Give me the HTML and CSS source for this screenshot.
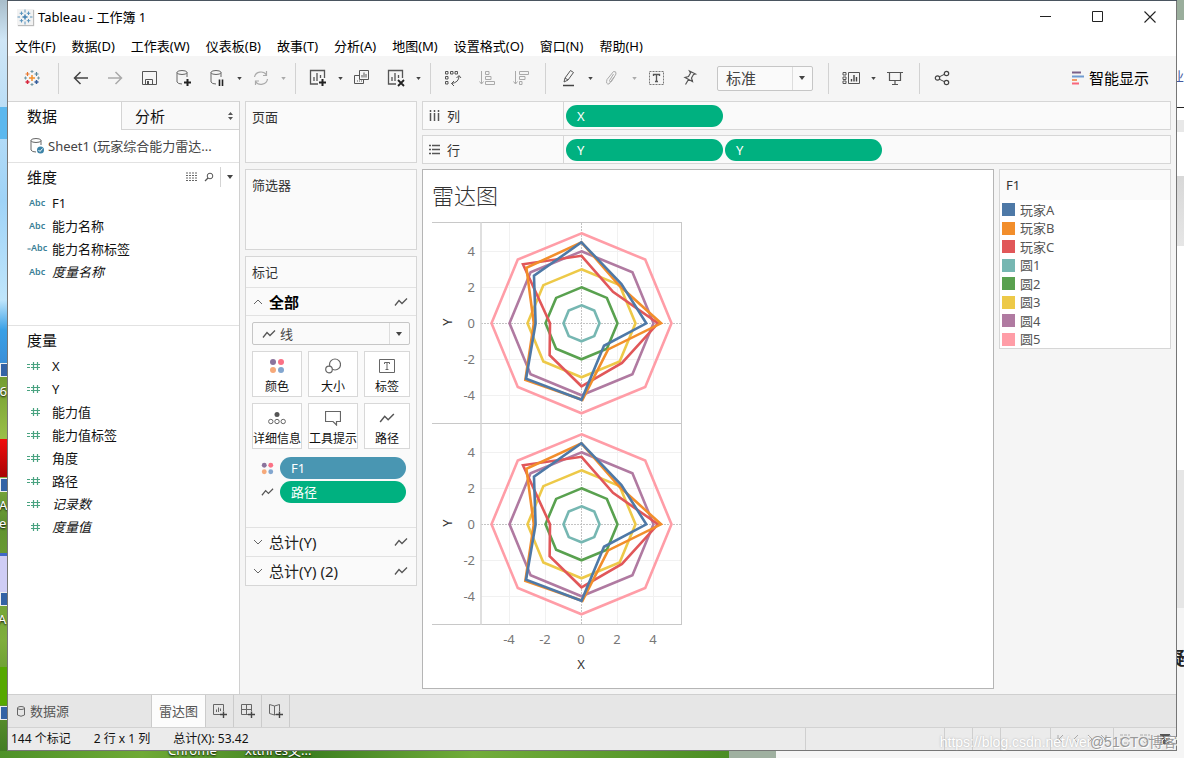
FILE: index.html
```html
<!DOCTYPE html>
<html lang="zh-CN">
<head>
<meta charset="utf-8">
<title>Tableau - 工作簿 1</title>
<link rel="stylesheet" href="styles.css">
</head>
<body>
<svg class="defs" width="0" height="0" aria-hidden="true">
  <defs>
    <symbol id="line" viewBox="0 0 14 10"><path d="M1 8.500L5 3.500L8 6.500L13 1.500" fill="none" stroke="#555" stroke-width="1.300"/></symbol>
    <symbol id="caret" viewBox="0 0 6 4"><path d="M0 0H6L3 4Z" fill="currentColor"/></symbol>
    <symbol id="dots" viewBox="0 0 16 16"><circle cx="4" cy="4" r="3" fill="#8b739c"/><circle cx="12" cy="4" r="3" fill="#fb7185"/><circle cx="4" cy="12" r="3" fill="#f6a97a"/><circle cx="12" cy="12" r="3" fill="#82a6cf"/></symbol>
    <symbol id="hash" viewBox="0 0 14 12"><path d="M6.500 2V10M10.500 2V10M4 4.500H13M4 7.500H13" stroke="#4aa381" stroke-width="1.200" fill="none"/></symbol>
    <symbol id="hasheq" viewBox="0 0 14 12"><path d="M6.500 2V10M10.500 2V10M4 4.500H13M4 7.500H13M0 4.500H3M0 7.500H3" stroke="#4aa381" stroke-width="1.200" fill="none"/></symbol>
    <symbol id="barbox" viewBox="0 0 20 20"><path d="M10 16H2.500V2.500H16.500V10M6 13V9M9 13V5M12.500 10V7" fill="none" stroke="#555" stroke-width="1.300"/></symbol>
    <symbol id="cyl" viewBox="0 0 20 20"><ellipse cx="9" cy="4.500" rx="5" ry="2" fill="none" stroke="#666"/><path d="M4 4.500V14Q5 16 9 16M14 4.500V9" fill="none" stroke="#666"/></symbol>
    <symbol id="marks" viewBox="0 0 20 20">
      <path d="M10 7V13M7 10H13" stroke="#f28e2b" stroke-width="1.500"/>
      <path d="M5.500 4V8M3.500 6H7.500" stroke="#e8762c" stroke-width="1.200"/>
      <path d="M14.500 4V8M12.500 6H16.500" stroke="#59879b" stroke-width="1.200"/>
      <path d="M5.500 12V16M3.500 14H7.500" stroke="#d7263d" stroke-width="1.500"/>
      <path d="M14.500 12V16M12.500 14H16.500" stroke="#355c9a" stroke-width="1.500"/>
      <path d="M10 2V5M8.500 3.500H11.500M2 10H5M3.500 8.500V11.500M15 10H18M16.500 8.500V11.500M10 15V18M8.500 16.500H11.500" stroke="#7199a6"/>
    </symbol>
    <g id="radar" fill="none" stroke-width="2.600">
      <g transform="scale(18 -18)">
        <polygon vector-effect="non-scaling-stroke" stroke="#ff9da7" points="0,5 3.54,3.54 5,0 3.54,-3.54 0,-5 -3.54,-3.54 -5,0 -3.54,3.54"/>
        <polygon vector-effect="non-scaling-stroke" stroke="#b07aa1" points="0,4 2.83,2.83 4,0 2.83,-2.83 0,-4 -2.83,-2.83 -4,0 -2.83,2.83"/>
        <polygon vector-effect="non-scaling-stroke" stroke="#edc948" points="0,3 2.12,2.12 3,0 2.12,-2.12 0,-3 -2.12,-2.12 -3,0 -2.12,2.12"/>
        <polygon vector-effect="non-scaling-stroke" stroke="#59a14f" points="0,2 1.41,1.41 2,0 1.41,-1.41 0,-2 -1.41,-1.41 -2,0 -1.41,1.41"/>
        <polygon vector-effect="non-scaling-stroke" stroke="#76b7b2" points="0,1 0.71,0.71 1,0 0.71,-0.71 0,-1 -0.71,-0.71 -1,0 -0.71,0.71"/>
        <polygon vector-effect="non-scaling-stroke" stroke="#e15759" points="0,3.75 1.75,1.75 4.25,0 2.25,-2.2 0,-3.5 -1.77,-1.77 -1.75,0 -3.25,3.28"/>
        <polygon vector-effect="non-scaling-stroke" stroke="#f28e2b" points="0,4.5 2.1,2.1 4.42,0 1.48,-1.45 0.05,-4.25 -3.12,-3.15 -2.65,0 -3.06,3.08"/>
        <polygon vector-effect="non-scaling-stroke" stroke="#4e79a7" points="0,4.5 2.22,2.18 3.6,0 1.25,-1.25 0,-4.25 -3.08,-3.08 -2.55,0 -2.64,2.64"/>
      </g>
    </g>
    <g id="cell">
      <path d="M77.500 1V201M113.500 1V201M185.500 1V201M221.500 1V201M49 29.500H249M49 65.500H249M49 137.500H249M49 173.500H249" stroke="#f1f1f1"/>
      <path d="M149.500 1V201M49 101.500H249" stroke="#c4c4c4" stroke-dasharray="2 1"/>
      <use href="#radar" x="149.500" y="101.300"/>
    </g>
  </defs>
</svg>

<div class="desktop">
  <div class="side left" aria-hidden="true">
    <i class="stripe panel"></i><i class="stripe red"></i><i class="stripe lilac"></i><i class="stripe green"></i>
    <i class="badge b1"></i><i class="badge b2"></i><i class="badge b3"></i><i class="badge b4"></i>
    <span class="frag f1">36</span><span class="frag f2">A</span><span class="frag f3">e</span><span class="frag f4">A</span>
  </div>
  <div class="side right" aria-hidden="true"><span class="frag r1">业</span><i class="dash"></i><span class="frag r2">疑</span></div>
  <div class="foot" aria-hidden="true"><span class="frag g1">Chrome</span><span class="frag g2">xtthres文...</span></div>

  <div class="window">
    <header class="titlebar">
      <svg class="appicon" width="16" height="16" viewBox="0 0 16 16"><path d="M8 5.500V10.500M5.500 8H10.500" stroke="#3f7fb0" stroke-width="1.400"/><path d="M4.500 2.500V6M2.700 4.300H6.200M11.500 2.500V6M9.800 4.300H13.300M4.500 10V13.500M2.700 11.700H6.200M11.500 10V13.500M9.800 11.700H13.300M8 .500V3.500M8 12.500V15.500M.500 8H3M13 8H15.500" stroke="#5a94bd"/></svg>
      <h1>Tableau - 工作簿 1</h1>
      <div class="winbtns">
        <button type="button" aria-label="最小化"><svg width="12" height="12"><path d="M0 5.500H11" stroke="#222"/></svg></button>
        <button type="button" aria-label="最大化"><svg width="12" height="12"><path d="M.500 .500H10.500V10.500H.500Z" fill="none" stroke="#222"/></svg></button>
        <button type="button" aria-label="关闭"><svg width="12" height="12"><path d="M.500 .500L11.500 11.500M11.500 .500L.500 11.500" stroke="#222" stroke-width="1.100"/></svg></button>
      </div>
    </header>

    <nav class="menubar">
      <button type="button">文件(F)</button><button type="button">数据(D)</button><button type="button">工作表(W)</button><button type="button">仪表板(B)</button><button type="button">故事(T)</button><button type="button">分析(A)</button><button type="button">地图(M)</button><button type="button">设置格式(O)</button><button type="button">窗口(N)</button><button type="button">帮助(H)</button>
    </nav>

    <div class="toolbar">
      <button type="button" class="tool home" aria-label="起始页"><svg width="20" height="20"><use href="#marks"/></svg></button>
      <i class="sep"></i>
      <button type="button" class="tool" aria-label="撤消"><svg width="20" height="20"><path d="M17 10H4M9.500 4L3.500 10L9.500 16" fill="none" stroke="#444" stroke-width="1.500"/></svg></button>
      <button type="button" class="tool" aria-label="重做"><svg width="20" height="20"><path d="M3 10H16M10.500 4L16.500 10L10.500 16" fill="none" stroke="#aaa" stroke-width="1.500"/></svg></button>
      <button type="button" class="tool" aria-label="保存"><svg width="20" height="20"><path d="M3.500 3.500H17.500V16.500H3.500ZM6.500 16.500V11.500H13.500V16.500" fill="none" stroke="#555"/><path d="M8 13H10V16H8Z" fill="#555"/></svg></button>
      <button type="button" class="tool" aria-label="新建数据源"><svg width="20" height="20"><use href="#cyl"/><path d="M14.500 11V18M11 14.500H18" stroke="#222" stroke-width="2"/></svg></button>
      <button type="button" class="tool" aria-label="暂停自动更新"><svg width="20" height="20"><use href="#cyl"/><path d="M12.500 11.500V18M15.500 11.500V18" stroke="#222" stroke-width="1.600"/></svg></button>
      <button type="button" class="drop" aria-label="更新选项"><svg width="5" height="3"><use href="#caret"/></svg></button>
      <button type="button" class="tool off" aria-label="运行更新"><svg width="20" height="20"><path d="M3.500 9A6.500 6 0 0 1 15.500 7M16.500 11A6.500 6 0 0 1 4.500 13.500M15.500 3V7.500H12M4.500 17V13H8" fill="none" stroke="#aaa" stroke-width="1.200"/></svg></button>
      <button type="button" class="drop off" aria-label="运行选项"><svg width="5" height="3"><use href="#caret"/></svg></button>
      <i class="sep"></i>
      <button type="button" class="tool" aria-label="新建工作表"><svg width="20" height="20"><use href="#barbox"/><path d="M14.500 11V18M11 14.500H18" stroke="#222" stroke-width="2"/></svg></button>
      <button type="button" class="drop" aria-label="新建选项"><svg width="5" height="3"><use href="#caret"/></svg></button>
      <button type="button" class="tool" aria-label="复制工作表"><svg width="20" height="20"><path d="M7.500 2.500H16.500V11.500H7.500ZM10 9.500V7M12 9.500V4.500M14 9.500V6M7 7.500H2.500V15.500H11.500V12M5 13H6M7 13H8M9 13H10" fill="none" stroke="#555"/></svg></button>
      <button type="button" class="tool" aria-label="清除工作表"><svg width="20" height="20"><use href="#barbox"/><path d="M12 12L18 18M18 12L12 18" stroke="#222" stroke-width="1.800"/></svg></button>
      <button type="button" class="drop" aria-label="清除选项"><svg width="5" height="3"><use href="#caret"/></svg></button>
      <i class="sep"></i>
      <button type="button" class="tool" aria-label="交换行和列"><svg width="20" height="20"><path d="M2.500 3.500H5V6H2.500ZM7.500 3.500H10V6H7.500ZM12 3.500H14.500V6H12ZM2.500 8.500H5V11H2.500ZM2.500 13.500H5V16H2.500ZM16 8Q16 14.500 8.500 15.500M13.500 10L16 7.500L18 10M11 13L8.500 15.500L11 18" fill="none" stroke="#555"/></svg></button>
      <button type="button" class="tool" aria-label="升序排序"><svg width="20" height="20"><path d="M4.500 3V16M2.500 13.500L4.500 16L6.500 13.500M8.500 3.500H12V6.500H8.500ZM8.500 8.500H14V11.500H8.500ZM8.500 13.500H17.500V16.500H8.500Z" fill="none" stroke="#aaa"/></svg></button>
      <button type="button" class="tool" aria-label="降序排序"><svg width="20" height="20"><path d="M4.500 3V16M2.500 13.500L4.500 16L6.500 13.500M8.500 3.500H17.500V6.500H8.500ZM8.500 8.500H14V11.500H8.500ZM8.500 13.500H11V16.500H8.500Z" fill="none" stroke="#aaa"/></svg></button>
      <i class="sep"></i>
      <button type="button" class="tool" aria-label="突出显示"><svg width="20" height="20"><path d="M6 14L7 10L12.500 2.500L15.500 4.500L10 12ZM7 10L10 12" fill="none" stroke="#555"/><path d="M5 17.500H16" stroke="#444" stroke-width="1.500"/></svg></button>
      <button type="button" class="drop" aria-label="突出显示选项"><svg width="5" height="3"><use href="#caret"/></svg></button>
      <button type="button" class="tool" aria-label="组成员"><svg width="20" height="20"><path d="M11.500 6L7.500 12.500Q7.500 14.500 9.500 13.500L14 6Q14.500 3 11.500 3.500L5 11.500Q3.500 16.500 7 16L12 9" fill="none" stroke="#aaa"/></svg></button>
      <button type="button" class="drop off" aria-label="组选项"><svg width="5" height="3"><use href="#caret"/></svg></button>
      <button type="button" class="tool" aria-label="显示标记标签"><svg width="20" height="20"><path d="M3.500 3.500H17.500V16.500H3.500Z" fill="none" stroke="#777" stroke-dasharray="2 1"/><path d="M7.500 8V6.500H13.500V8M10.500 6.500V13.500M9 13.500H12" fill="none" stroke="#555" stroke-width="1.300"/></svg></button>
      <button type="button" class="tool" aria-label="固定轴"><svg width="20" height="20"><path d="M9.500 3L15.500 6L13.500 6.500L11.500 10L12.500 13.500L5 9.500L8.500 8.500L10.500 5ZM8.500 11.500L5.500 16.500" fill="none" stroke="#555" stroke-width="1.200"/></svg></button>
      <div class="select fit">
        <select aria-label="适合"><option>标准</option></select>
        <svg class="tri" width="6" height="4"><use href="#caret"/></svg>
      </div>
      <i class="sep"></i>
      <button type="button" class="tool" aria-label="显示/隐藏卡"><svg width="20" height="20"><path d="M7.500 4.500H18.500V15.500H7.500ZM2 4.500H5V7H2ZM2 9H5V11.500H2ZM2 13H5V15.500H2Z" fill="none" stroke="#555"/><path d="M10.500 13.500V11M13 13.500V7M15.500 13.500V9" stroke="#444" stroke-width="1.400"/></svg></button>
      <button type="button" class="drop" aria-label="卡选项"><svg width="5" height="3"><use href="#caret"/></svg></button>
      <button type="button" class="tool" aria-label="演示模式"><svg width="20" height="20"><path d="M2 4.500H18M4.500 4.500V12.500H15.500V4.500M10 12.500V16.500M7 16.500H13" fill="none" stroke="#555" stroke-width="1.200"/></svg></button>
      <i class="sep"></i>
      <button type="button" class="tool" aria-label="共享"><svg width="20" height="20"><path d="M7 9L13 6M7 11L13 14" stroke="#444"/><g fill="none" stroke="#444" stroke-width="1.200"><circle cx="5.500" cy="10" r="2.200"/><circle cx="14.500" cy="5.500" r="2.200"/><circle cx="14.500" cy="14.500" r="2.200"/></g></svg></button>
      <button type="button" class="showme"><svg width="14" height="14"><path d="M1 1.500H10" stroke="#7b6089" stroke-width="2"/><path d="M1 5.500H13" stroke="#6f9bd1" stroke-width="2"/><path d="M1 9H6" stroke="#f29a66" stroke-width="2"/><path d="M1 12.500H8" stroke="#f8667b" stroke-width="2"/></svg>智能显示</button>
    </div>

    <main class="main">
      <aside class="data">
        <div class="datatabs">
          <button type="button" class="on">数据</button>
          <button type="button">分析<svg width="5" height="8"><path d="M0 3L2.500 0L5 3ZM0 5L2.500 8L5 5Z" fill="#555"/></svg></button>
        </div>
        <div class="source"><svg width="16" height="18" viewBox="2 1 16 18"><use href="#cyl" width="20" height="20"/><circle cx="13.500" cy="14" r="3.500" fill="#3d84a8"/><path d="M11.500 14L13 15.500L15.500 12.500" fill="none" stroke="#fff"/></svg><span>Sheet1 (玩家综合能力雷达...</span></div>
        <section class="dims">
          <div class="head"><h2>维度</h2>
            <button type="button" aria-label="查看数据"><svg width="12" height="10"><path d="M0 1H12M0 3.500H12M0 6H12M0 8.500H12" stroke="#666" stroke-dasharray="2 1"/></svg></button>
            <button type="button" aria-label="查找"><svg width="10" height="10"><circle cx="6" cy="4" r="2.800" fill="none" stroke="#555"/><path d="M4 6L1 9" stroke="#555" stroke-width="1.300"/></svg></button>
            <button type="button" class="more" aria-label="更多"><svg width="6" height="4"><use href="#caret"/></svg></button>
          </div>
          <ul>
            <li><b>Abc</b>F1</li><li><b>Abc</b>能力名称</li><li><b class="eq">Abc</b>能力名称标签</li><li><b>Abc</b><em>度量名称</em></li>
          </ul>
        </section>
        <section class="meas">
          <div class="head"><h2>度量</h2></div>
          <ul>
            <li><svg width="14" height="12"><use href="#hasheq"/></svg>X</li>
            <li><svg width="14" height="12"><use href="#hasheq"/></svg>Y</li>
            <li><svg width="14" height="12"><use href="#hash"/></svg>能力值</li>
            <li><svg width="14" height="12"><use href="#hasheq"/></svg>能力值标签</li>
            <li><svg width="14" height="12"><use href="#hasheq"/></svg>角度</li>
            <li><svg width="14" height="12"><use href="#hasheq"/></svg>路径</li>
            <li><svg width="14" height="12"><use href="#hasheq"/></svg><em>记录数</em></li>
            <li><svg width="14" height="12"><use href="#hash"/></svg><em>度量值</em></li>
          </ul>
        </section>
      </aside>

      <div class="cards">
        <section class="card pages"><h3>页面</h3></section>
        <section class="card filters"><h3>筛选器</h3></section>
        <section class="card markscard">
          <h3>标记</h3>
          <button type="button" class="layer all"><svg width="10" height="6"><path d="M1 5L5 1L9 5" fill="none" stroke="#666"/></svg><span>全部</span><svg width="14" height="10"><use href="#line"/></svg></button>
          <div class="markbody">
            <div class="select type"><svg class="pre" width="14" height="10"><use href="#line"/></svg><select aria-label="标记类型"><option>线</option></select><svg class="tri" width="6" height="4"><use href="#caret"/></svg></div>
            <div class="shelf">
              <button type="button"><svg width="16" height="16"><use href="#dots"/></svg>颜色</button>
              <button type="button"><svg width="16" height="16"><circle cx="10" cy="6.500" r="5.500" fill="none" stroke="#666" stroke-width="1.200"/><circle cx="4" cy="11.500" r="3.300" fill="#fff" stroke="#666" stroke-width="1.200"/></svg>大小</button>
              <button type="button"><svg width="16" height="16"><path d="M.500 1.500H15.500V14.500H.500ZM5.500 6V4.500H10.500V6M8 4.500V11.500M6.500 11.500H9.500" fill="none" stroke="#666"/></svg>标签</button>
              <button type="button"><svg width="18" height="16"><circle cx="9" cy="4.500" r="2.500" fill="#555"/><g fill="none" stroke="#666"><circle cx="2.800" cy="11.500" r="2.200"/><circle cx="9" cy="11.500" r="2.200"/><circle cx="15.200" cy="11.500" r="2.200"/></g></svg>详细信息</button>
              <button type="button"><svg width="16" height="16"><path d="M.500 1.500H15.500V11.500H11.500V15L8 11.500H.500Z" fill="none" stroke="#666" stroke-width="1.200"/></svg>工具提示</button>
              <button type="button"><svg width="16" height="16" viewBox="0 -2 14 14"><use href="#line" width="14" height="10"/></svg>路径</button>
            </div>
            <div class="encoding"><svg width="13" height="13"><use href="#dots"/></svg><button type="button" class="pill blue">F1</button></div>
            <div class="encoding"><svg width="13" height="10"><use href="#line"/></svg><button type="button" class="pill">路径</button></div>
          </div>
          <button type="button" class="layer"><svg width="10" height="6"><path d="M1 1L5 5L9 1" fill="none" stroke="#666"/></svg><span>总计(Y)</span><svg width="14" height="10"><use href="#line"/></svg></button>
          <button type="button" class="layer"><svg width="10" height="6"><path d="M1 1L5 5L9 1" fill="none" stroke="#666"/></svg><span>总计(Y) (2)</span><svg width="14" height="10"><use href="#line"/></svg></button>
        </section>
      </div>

      <div class="work">
        <div class="rail"><div class="railname"><svg width="11" height="12"><path d="M1.500 0V2M5.500 0V2M9.500 0V2M1.500 3V11M5.500 3V11M9.500 3V11" stroke="#555" stroke-width="1.500"/></svg>列</div><button type="button" class="pill wide">X</button></div>
        <div class="rail"><div class="railname"><svg width="11" height="12"><path d="M0 1.500H2M0 5.500H2M0 9.500H2M3 1.500H11M3 5.500H11M3 9.500H11" stroke="#555" stroke-width="1.500"/></svg>行</div><button type="button" class="pill wide">Y</button><button type="button" class="pill wide">Y</button></div>
        <div class="canvas">
          <section class="view">
            <h2>雷达图</h2>
            <svg class="chart" width="252" height="456" viewBox="0 0 252 456" role="img" aria-label="雷达图">
              <use href="#cell"/><use href="#cell" y="201"/>
              <path d="M0 .500H250M0 201.500H250M0 402.500H250M249.500 0V403" fill="none" stroke="#c8c8c8"/>
              <path d="M49 0V403" stroke="#d4d4d4" stroke-width="1.500"/>
              <g class="ticks" text-anchor="end">
                <text x="43" y="34">4</text><text x="43" y="70">2</text><text x="43" y="106">0</text><text x="43" y="142">-2</text><text x="43" y="178">-4</text>
                <text x="43" y="235">4</text><text x="43" y="271">2</text><text x="43" y="307">0</text><text x="43" y="343">-2</text><text x="43" y="379">-4</text>
              </g>
              <g class="ticks" text-anchor="middle">
                <text x="77" y="422">-4</text><text x="113" y="422">-2</text><text x="149" y="422">0</text><text x="185" y="422">2</text><text x="221" y="422">4</text>
              </g>
              <g class="names" text-anchor="middle"><text x="149" y="447">X</text><text transform="translate(20 100) rotate(-90)">Y</text><text transform="translate(20 301) rotate(-90)">Y</text></g>
            </svg>
          </section>
          <aside class="legend">
            <h3>F1</h3>
            <ul>
              <li class="c1">玩家A</li><li class="c2">玩家B</li><li class="c3">玩家C</li><li class="c4">圆1</li><li class="c5">圆2</li><li class="c6">圆3</li><li class="c7">圆4</li><li class="c8">圆5</li>
            </ul>
          </aside>
        </div>
      </div>
    </main>

    <nav class="sheets">
      <button type="button" class="ds"><svg width="8" height="11"><ellipse cx="4" cy="2" rx="3.500" ry="1.500" fill="none" stroke="#666"/><path d="M.500 2V9Q4 11.500 7.500 9V2" fill="none" stroke="#666"/></svg>数据源</button>
      <button type="button" class="on">雷达图</button>
      <button type="button" class="new" aria-label="新建工作表"><svg width="14" height="14"><path d="M7 10.500H.500V.500H10.500V7M3.500 8V5.500M5.500 8V3.500M7.500 7V4.500" fill="none" stroke="#666"/><path d="M10.500 7.500V14M7 10.500H14" stroke="#444" stroke-width="1.400"/></svg></button>
      <button type="button" class="new" aria-label="新建仪表板"><svg width="14" height="14"><path d="M7 10.500H.500V.500H10.500V7M5.500 .500V10M.500 5.500H10.500" fill="none" stroke="#666"/><path d="M10.500 7.500V14M7 10.500H14" stroke="#444" stroke-width="1.400"/></svg></button>
      <button type="button" class="new" aria-label="新建故事"><svg width="14" height="14"><path d="M7 10.500L5.500 11L.500 9.500V.500L5.500 2L10.500 .500V7M5.500 2V11" fill="none" stroke="#666"/><path d="M10.500 7.500V14M7 10.500H14" stroke="#444" stroke-width="1.400"/></svg></button>
    </nav>
    <footer class="status">
      <span>144 个标记</span><span>2 行 x 1 列</span><span>总计(X): 53.42</span>
      <div class="boxes"><i class="w139"></i><i class="w28"></i><i class="w28"></i><i class="w50"></i><i class="w63"><svg width="50" height="8"><path d="M6 0L2 4L6 8M1 0V8M21 0L17 4L21 8M31 0L35 4L31 8M44 0L48 4L44 8M49 0V8" fill="none" stroke="#aaa"/></svg></i><i class="w63"><svg width="50" height="11"><path d="M0 1H10M0 5H10M0 9H10M20 1H30M20 5H30L25 9Z" stroke="#aaa" fill="none" stroke-dasharray="3 1"/><path d="M40 0H50V10H40Z" fill="#555"/><path d="M42 7L46 3H48V7" fill="none" stroke="#ddd"/></svg></i></div>
    </footer>
  </div>
  <div class="credit" aria-hidden="true"><span class="url">https://blog.csdn.net/wei</span><span class="site">@51CTO博客</span></div>
</div>
</body>
</html>
```

FILE: styles.css
```css
* { box-sizing: border-box; }
body { margin: 0; font: 13px/20px "Noto Sans", "Noto Sans CJK SC", sans-serif; color: #222; }
h1, h2, h3, ul { margin: 0; padding: 0; font-weight: 400; list-style: none; }
button, select { font: inherit; color: inherit; background: none; border: 0; border-radius: 0; margin: 0; padding: 0; }
svg { display: block; flex: none; }
.defs { position: absolute; }

/* desktop behind the window */
.desktop { position: relative; display: flex; min-height: 100vh; padding: 1px 7px 7px; background: #4a5560; overflow: hidden; }
.side, .foot { position: absolute; overflow: hidden; }
.side { top: 0; bottom: 0; }
.left { left: 0; width: 7px; background: linear-gradient(#a8bdca 0, #cfe6f6 40px, #9fd3f7 200px, #bfe5fb 300px, #39a0e6 330px, #3a8fd8 362px, #6f9a2e 372px, #9bc04a 440px, #5f9130 520px, #7fae3c 640px, #3f7a22 100%); }
.right { right: 0; width: 7px; background: linear-gradient(#9aae9c 20px, #fff 20px, #fff 120px, #e8e8e8 120px, #e8e8e8 132px, #fff 132px, #fff 176px, #d8d8d8 176px, #e6e6e6 246px, #fff 246px, #fff 470px, #e6e6e6 470px, #e6e6e6 608px, #f5f5f5 608px); }
.foot { left: 0; right: 0; bottom: 0; height: 7px; background: linear-gradient(90deg, #4d9128 0, #6faa35 12%, #3c7f20 26%, #72ad3a 40%, #4b8d24 61.600%, #9fb0a0 61.600%, #9fb0a0 65.500%, #f5f5f5 65.500%); }
.stripe, .badge, .frag, .dash { position: absolute; }
.stripe { left: 0; width: 8px; }
.panel { top: 107px; height: 32px; background: #5cb8ee; }
.red { top: 439px; height: 38px; background: linear-gradient(#f00c0c, #a80505); }
.lilac { top: 553px; height: 40px; background: #cfcdf5; border-top: 3px solid #4068c8; }
.green { top: 667px; height: 38px; background: #55a800; }
.badge { left: 0; width: 8px; height: 14px; background: #3463a5; border: 1px solid #eee; }
.b1 { top: 363px; } .b2 { top: 478px; } .b3 { top: 592px; } .b4 { top: 706px; }
.left .frag, .foot .frag { color: #fff; text-shadow: 0 1px 2px #000; }
.f1 { top: 381px; left: -8px; } .f2 { top: 495px; left: -1px; } .f3 { top: 513px; left: -1px; } .f4 { top: 609px; left: -2px; }
.g1, .g2 { top: -9px; line-height: 16px; }
.g1 { left: 168px; } .g2 { left: 245px; }
.r1 { top: 66px; left: -6px; color: #4358a0; }
.r2 { top: 648px; left: -10px; font-size: 18px; font-weight: 700; }
.dash { top: 107px; left: 0; width: 7px; height: 1px; background: #222; }

.window { position: relative; display: flex; flex-direction: column; flex: 1; min-width: 0; background: #f5f5f5; border: 1px solid #767676; border-top: 0; }

.titlebar { display: flex; align-items: center; height: 32px; padding-left: 9px; background: #fff; }
.appicon { background: #f2f2f2; box-shadow: 1px 1px 1px #bbb; }
.titlebar h1 { margin-left: 5px; font-size: 13px; color: #000; }
.winbtns { display: flex; margin-left: auto; }
.winbtns button { display: grid; place-items: center; width: 52px; height: 32px; }
.menubar { display: flex; align-items: center; gap: 16px; height: 23px; padding: 2px 7px 0; background: #fff; color: #000; }

.toolbar { display: flex; align-items: center; height: 45px; padding: 0 27px 1px 7px; color: #444; }
.tool { display: grid; place-items: center; flex: none; width: 34px; height: 30px; }
.home { margin-right: 2px; }
.drop { display: grid; place-items: center; flex: none; width: 10px; height: 30px; }
.off { color: #aaa; }
.sep { flex: none; width: 1px; height: 31px; margin: 0 5px 0 7px; background: #d2d2d2; }
.select { position: relative; display: flex; align-items: center; border: 1px solid #c6c6c6; border-radius: 2px; background: #fafafa; color: #444; }
.select select { flex: 1; height: 100%; appearance: none; }
.select .tri { position: absolute; right: 7px; }
.select::after { content: ""; position: absolute; right: 19px; top: 0; bottom: 0; border-left: 1px solid #ddd; }
.fit { width: 96px; height: 25px; margin: 0 8px 0 10px; font-size: 15px; }
.fit select { padding-left: 8px; }
.showme { display: flex; align-items: center; gap: 4px; margin-left: auto; font-size: 15px; color: #000; white-space: nowrap; }

.main { display: flex; flex: 1; min-height: 0; }
.data { display: flex; flex-direction: column; flex: none; width: 232px; background: #fff; border-right: 1px solid #d0d0d0; color: #111; }
.datatabs { display: flex; height: 29px; font-size: 15px; }
.datatabs button { display: flex; align-items: center; justify-content: space-between; flex: 1; padding: 0 6px 0 13px; background: #f9f9f9; border: 1px solid #d4d4d4; border-right: 0; }
.datatabs .on { flex: none; width: 113px; padding-left: 19px; background: #fff; border: 0; border-top: 1px solid #d4d4d4; }
.source { display: flex; align-items: center; gap: 3px; height: 33px; padding-left: 21px; border-bottom: 1px solid #e2e2e2; color: #444; white-space: nowrap; }
.head { display: flex; align-items: center; gap: 6px; height: 28px; padding-left: 19px; color: #444; }
.head h2 { margin-right: auto; font-size: 15px; color: #111; }
.head .more { display: grid; place-items: center; width: 19px; height: 20px; border-left: 1px solid #d4d4d4; }
.dims { height: 163px; border-bottom: 1px solid #e2e2e2; }
.data li { display: flex; align-items: center; height: 23px; padding-left: 19px; }
.data li b { width: 25px; padding-left: 2px; font-size: 9px; font-weight: 600; line-height: 12px; color: #3b7f97; }
.data li .eq { padding-left: 0; }
.eq::before { content: "="; font-size: 7px; }
.data li svg { width: 14px; margin-right: 11px; }

.cards { display: flex; flex-direction: column; gap: 6px; flex: none; width: 172px; margin-left: 5px; }
.card { background: #fafafa; border: 1px solid #d6d6d6; }
.card h3 { padding: 5px 6px; font-size: 13px; color: #333; }
.pages { height: 62px; } .filters { height: 81px; }
.layer { display: flex; align-items: center; width: 100%; height: 29px; padding: 0 8px 0 7px; border-top: 1px solid #e2e2e2; font-size: 15px; color: #222; text-align: left; }
.layer span { flex: 1; margin-left: 6px; }
.all { font-weight: 700; color: #000; border-bottom: 1px solid #e2e2e2; }
.markbody { padding: 6px 6px 22px; }
.type { height: 23px; margin-bottom: 6px; }
.type .pre { margin-left: 9px; }
.type select { padding-left: 4px; }
.shelf { display: grid; grid-template-columns: 50px 50px 1fr; gap: 6px; margin-bottom: 8px; }
.shelf button { display: flex; flex-direction: column; align-items: center; gap: 5px; height: 46px; padding-top: 6px; background: #fff; border: 1px solid #d8d8d8; font-size: 12px; line-height: 16px; white-space: nowrap; min-width: 0; color: #111; }
.encoding { display: flex; align-items: center; justify-content: space-between; padding: 0 4px 0 9px; margin-bottom: 2px; }
.pill { flex: none; width: 126px; height: 22px; padding: 0 11px; border-radius: 11px; background: #00b180; color: #fff; text-align: left; }
.blue { background: #4996b2; }
.wide { width: 157px; margin-right: 2px; }

.work { display: flex; flex-direction: column; gap: 5px; flex: 1; min-width: 0; padding: 0 5px 5px 5px; }
.rail { display: flex; align-items: center; height: 29px; background: #fafafa; border: 1px solid #d6d6d6; }
.railname { display: flex; align-items: center; gap: 7px; align-self: stretch; width: 141px; margin-right: 2px; padding-left: 6px; border-right: 1px solid #d6d6d6; color: #333; }
.canvas { display: flex; align-items: flex-start; gap: 5px; flex: 1; min-height: 0; }
.view { align-self: stretch; flex: 1; min-width: 0; padding: 9px; background: #fff; border: 1px solid #b5b5b5; }
.view h2 { height: 43px; font-size: 22px; line-height: 32px; font-weight: 300; color: #333; }
.ticks { font-size: 13px; fill: #777; }
.names { font-size: 13px; fill: #333; }
.legend { width: 172px; background: #fff; border: 1px solid #d6d6d6; color: #555; }
.legend h3 { height: 30px; padding: 5px 6px; background: #fafafa; font-size: 13px; color: #333; }
.legend li { display: flex; align-items: center; gap: 5px; height: 19px; padding-left: 2px; line-height: 18px; }
.legend li:nth-child(even) { height: 18px; }
.legend li::before { content: ""; width: 13px; height: 13px; background: currentColor; }
.c1::before { color: #4e79a7; } .c2::before { color: #f28e2b; } .c3::before { color: #e15759; } .c4::before { color: #76b7b2; }
.c5::before { color: #59a14f; } .c6::before { color: #edc948; } .c7::before { color: #b07aa1; } .c8::before { color: #ff9da7; }

.sheets { display: flex; height: 33px; background: #e6e6e6; border-top: 1px solid #cfcfcf; color: #555; }
.sheets button { display: flex; align-items: center; justify-content: center; border-right: 1px solid #cbcbcb; }
.sheets .ds { justify-content: flex-start; gap: 5px; width: 144px; padding-left: 9px; }
.sheets .on { width: 54px; background: #fcfcfc; }
.sheets .new { width: 28px; }
.status { display: flex; align-items: center; gap: 23px; height: 23px; padding-left: 3px; background: #ebebeb; border-top: 1px solid #d2d2d2; font-size: 12px; color: #111; white-space: nowrap; }
.boxes { display: flex; align-self: stretch; margin-left: auto; }
.boxes i { display: grid; place-items: center; border-left: 1px solid #cfcfcf; }
.w139 { width: 139px; } .w28 { width: 28px; } .w50 { width: 50px; } .w63 { width: 63px; }

/* credit line laid over the lower right corner */
.credit { position: absolute; right: 7px; bottom: 6px; display: flex; white-space: nowrap; }
.url { font: 14px/20px "Liberation Sans", sans-serif; color: #fff; text-shadow: 0 0 2px #aaa; }
.site { font: 14px/20px "Liberation Sans", "Noto Sans CJK SC", sans-serif; color: #999; text-shadow: 1px 1px 0 #fff; }
```
